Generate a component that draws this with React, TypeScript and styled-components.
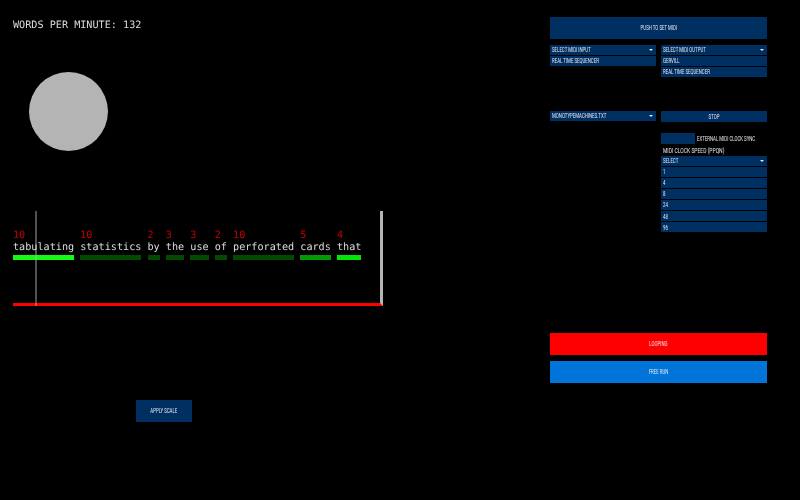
import React from "react";
import styled, { createGlobalStyle } from "styled-components";

const NAVY = "#002f62";

const GlobalStyle = createGlobalStyle`
  html, body {
    margin: 0;
    padding: 0;
    background: #000;
  }
`;

const words = [
  { text: "tabulating", count: 10, color: "#14fa14" },
  { text: "statistics", count: 10, color: "#024a02" },
  { text: "by", count: 2, color: "#024a02" },
  { text: "the", count: 3, color: "#024a02" },
  { text: "use", count: 3, color: "#024a02" },
  { text: "of", count: 2, color: "#024a02" },
  { text: "perforated", count: 10, color: "#024a02" },
  { text: "cards", count: 5, color: "#039903" },
  { text: "that", count: 4, color: "#03e603" },
];

const App: React.FC = () => {
  return (
    <Page>
      <GlobalStyle />
      <LeftPanel>
        <WordsPerMinute>WORDS PER MINUTE: 132</WordsPerMinute>
        <Circle />
        <Score>
          <Playhead />
          <WordRow>
            {words.map((w, i) => (
              <Word key={i}>
                <Count>{w.count}</Count>
                <WordText>{w.text}</WordText>
                <WordBar $color={w.color} />
              </Word>
            ))}
          </WordRow>
        </Score>
        <ApplyScale><CenterLabel>APPLY SCALE</CenterLabel></ApplyScale>
      </LeftPanel>
      <RightPanel>
        <PushButton><CenterLabel>PUSH TO SET MIDI</CenterLabel></PushButton>
        <MidiColumns>
          <Column>
            <SelectHead><Label>SELECT MIDI INPUT</Label></SelectHead>
            <Option><Label>REAL TIME SEQUENCER</Label></Option>
          </Column>
          <Column>
            <SelectHead><Label>SELECT MIDI OUTPUT</Label></SelectHead>
            <Option><Label>GERVILL</Label></Option>
            <Option><Label>REAL TIME SEQUENCER</Label></Option>
          </Column>
        </MidiColumns>
        <TransportColumns>
          <Column>
            <SelectHead><Label>MONOTYPEMACHINES.TXT</Label></SelectHead>
          </Column>
          <Column>
            <StopButton><CenterLabel>STOP</CenterLabel></StopButton>
            <SyncRow>
              <SyncToggle />
              <Label>EXTERNAL MIDI CLOCK SYNC</Label>
            </SyncRow>
            <SpeedLabel><WideLabel>MIDI CLOCK SPEED (PPQN)</WideLabel></SpeedLabel>
            <SelectHead><Label>SELECT</Label></SelectHead>
            <Option><Label>1</Label></Option>
            <Option><Label>4</Label></Option>
            <Option><Label>8</Label></Option>
            <Option><Label>24</Label></Option>
            <Option><Label>48</Label></Option>
            <Option><Label>96</Label></Option>
          </Column>
        </TransportColumns>
        <BigButton $bg="#ff0000"><CenterLabel>LOOPING</CenterLabel></BigButton>
        <BigButton $bg="#0074d9"><CenterLabel>FREE RUN</CenterLabel></BigButton>
      </RightPanel>
    </Page>
  );
};

export default App;

const Page = styled.div`
  display: flex;
  width: 800px;
  height: 500px;
  overflow: hidden;
  background: #000;
`;

const LeftPanel = styled.div`
  width: 550px;
  padding-left: 13px;
  box-sizing: border-box;
`;

const WordsPerMinute = styled.div`
  margin-top: 19px;
  height: 13px;
  line-height: 13px;
  font-family: "DejaVu Sans Mono", monospace;
  font-size: 10.16px;
  text-rendering: geometricPrecision;
  color: #dcdcdc;
  filter: grayscale(1);
`;

const Circle = styled.div`
  width: 79px;
  height: 79px;
  margin: 40px 0 0 16px;
  border-radius: 50%;
  background: #b4b4b4;
`;

const Score = styled.div`
  position: relative;
  width: 370px;
  height: 95px;
  margin-top: 60px;
  box-sizing: border-box;
  padding-top: 19px;
  border-bottom: 3px solid #ff0000;
  border-right: 3px solid #b4b4b4;
`;

const Playhead = styled.div`
  position: absolute;
  left: 22px;
  top: 0;
  bottom: -3px;
  width: 2px;
  background: rgba(180, 180, 180, 0.45);
`;

const WordRow = styled.div`
  display: flex;
  gap: 6.1px;
`;

const Word = styled.div`
  display: flex;
  flex-direction: column;
`;

const Count = styled.div`
  height: 11px;
  line-height: 12px;
  font-family: "DejaVu Sans Mono", monospace;
  font-size: 10.16px;
  text-rendering: geometricPrecision;
  color: #c40000;
  filter: grayscale(0);
`;

const WordText = styled.div`
  height: 13px;
  line-height: 13px;
  font-family: "DejaVu Sans Mono", monospace;
  font-size: 10.16px;
  text-rendering: geometricPrecision;
  color: #dcdcdc;
  filter: grayscale(1);
`;

const WordBar = styled.div<{ $color: string }>`
  height: 5px;
  margin-top: 1px;
  background: ${(p) => p.$color};
`;

const Label = styled.span`
  display: inline-block;
  flex: none;
  white-space: nowrap;
  font-family: "Roboto", sans-serif;
  font-size: 6.4px;
  line-height: 8px;
  color: #e4e8f0;
  transform: scaleX(0.68);
  transform-origin: left center;
`;

const CenterLabel = styled(Label)`
  transform-origin: center center;
`;

const WideLabel = styled(Label)`
  transform: scaleX(0.78);
`;

const ApplyScale = styled.div`
  display: flex;
  align-items: center;
  justify-content: center;
  width: 56px;
  height: 22px;
  margin: 94px 0 0 122.5px;
  background: ${NAVY};
`;

const RightPanel = styled.div`
  width: 217px;
  padding-top: 17px;
  box-sizing: border-box;
`;

const PushButton = styled.div`
  display: flex;
  align-items: center;
  justify-content: center;
  height: 22px;
  background: ${NAVY};
`;

const MidiColumns = styled.div`
  display: grid;
  grid-template-columns: 105.5px 106px;
  column-gap: 5.5px;
  height: 66.5px;
  margin-top: 5.5px;
`;

const TransportColumns = styled.div`
  display: grid;
  grid-template-columns: 105.5px 106px;
  column-gap: 5.5px;
  height: 222px;
`;

const Column = styled.div`
  display: flex;
  flex-direction: column;
`;

const Option = styled.div`
  display: flex;
  align-items: center;
  box-sizing: border-box;
  height: 11.1px;
  padding: 1px 0 0 2px;
  background: ${NAVY};
  border-bottom: 1px solid #000;
`;

const SelectHead = styled(Option)`
  position: relative;
  padding-top: 0;

  &::after {
    content: "";
    position: absolute;
    right: 3px;
    top: 4px;
    border-left: 2px solid transparent;
    border-right: 2px solid transparent;
    border-top: 2px solid #e4e8f0;
  }
`;

const StopButton = styled.div`
  display: flex;
  align-items: center;
  justify-content: center;
  height: 11px;
  background: ${NAVY};
`;

const SyncRow = styled.div`
  display: flex;
  align-items: center;
  gap: 1.5px;
  margin-top: 11px;
`;

const SyncToggle = styled.div`
  flex: none;
  width: 34px;
  height: 11px;
  background: ${NAVY};
`;

const SpeedLabel = styled.div`
  display: flex;
  align-items: center;
  box-sizing: border-box;
  height: 11.5px;
  padding: 2px 0 0 2px;
`;

const BigButton = styled.div<{ $bg: string }>`
  display: flex;
  align-items: center;
  justify-content: center;
  height: 22px;
  margin-bottom: 6px;
  background: ${(p) => p.$bg};
`;
